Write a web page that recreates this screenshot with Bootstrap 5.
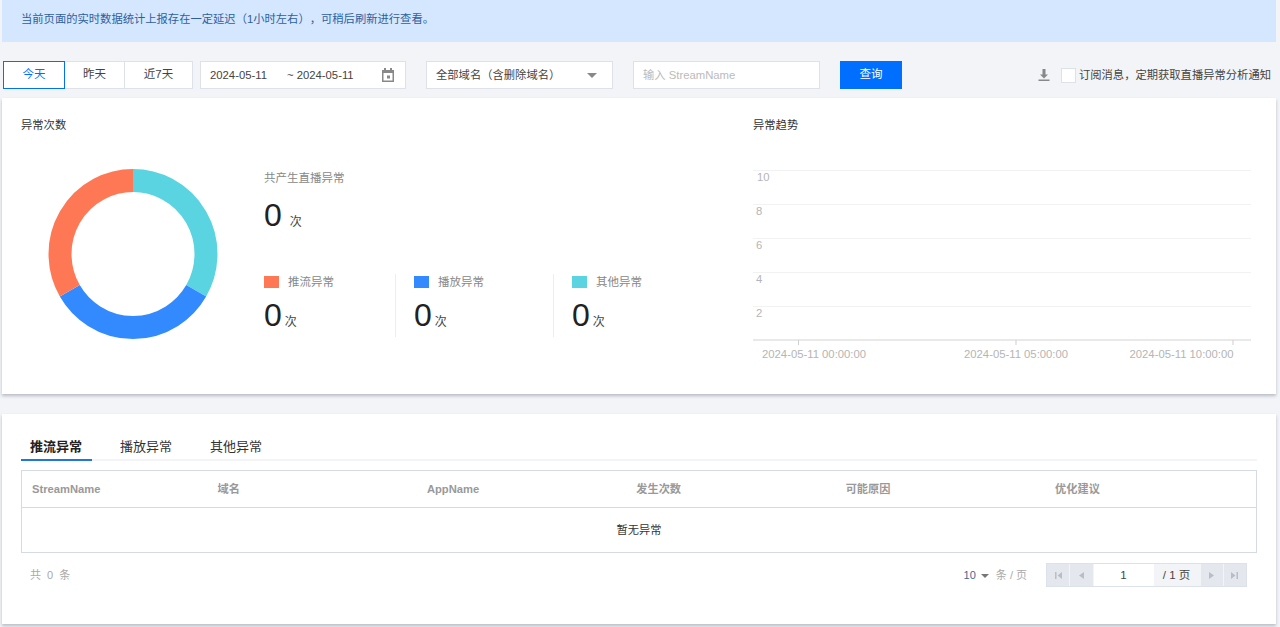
<!DOCTYPE html>
<html lang="zh-CN">
<head>
<meta charset="utf-8">
<title>直播异常</title>
<link href="https://cdn.jsdelivr.net/npm/bootstrap@5.3.0/dist/css/bootstrap.min.css" rel="stylesheet">
<style>
html,body{height:627px;overflow:hidden}
body{background:#f2f4f8;font-family:"Liberation Sans","Noto Sans CJK SC",sans-serif;font-size:11px;color:#444;padding:0 4px 0 2px;text-spacing-trim:space-all}
.notice{height:42px;background:#d5e7ff;color:#2f5e9e;padding-left:19px;line-height:38px;font-size:11.3px}
.toolbar{height:28px;margin-top:19px;margin-bottom:9px;padding-left:1px}
.rangebtn{height:28px;background:#fff;border:1px solid #dde2ea;color:#444;font-size:11.5px;display:flex;align-items:center;justify-content:center;margin-left:-1px}
.rangebtn.on{border-color:#006eff;color:#006eff;position:relative;z-index:1;margin-left:0}
.w62{width:62px}.w61{width:61px}.w69{width:69px}
.fieldbox{height:28px;background:#fff;border:1px solid #dde2ea;display:flex;align-items:center;font-size:11.3px;padding:0 9px;color:#444}
.datebox{width:206px;margin-left:7px}
.dateend{margin-left:20px}
.selbox{width:187px;margin-left:20px}
.inbox{width:187px;margin-left:20px;color:#bbb}
.querybtn{width:62px;height:28px;margin-left:20px;background:#006eff;border:0;border-radius:0;color:#fff;font-size:11.5px;padding:0}
.caret{width:0;height:0;border-left:5px solid transparent;border-right:5px solid transparent;border-top:5px solid #888;margin-left:auto;margin-right:6px}
.subbox{width:15px;height:15px;background:#fff;border:1px solid #dde2ea;margin:0 3px 0 10px}
.subtext{font-size:11.3px;color:#444;margin-right:5px}
.panel{background:#fff;box-shadow:0 2px 3px rgba(54,58,80,.3);border-radius:0}
.panel-top{height:296px;margin-bottom:20px}
.panel-bot{height:210px;padding:21px 19px 0}
.leftpart{width:733px;padding:20px 0 0 19px}
.rightpart{flex:1;padding:20px 23px 0 20px}
.headline{font-size:11.3px;color:#333;line-height:14px}
.donutwrap{width:243px;padding:36px 0 0 27px}
.statcol{padding-top:38px}
.graylabel{color:#888;font-size:11.5px;line-height:16px}
.bignum{font-size:32px;line-height:36px;color:#222}
.unit{font-size:12px;color:#444}
.totalrow{margin-top:11px;height:73px}
.legendcol{height:63px;border-left:1px solid #eee}
.firstleg{width:131px}
.secondleg{width:158px;padding-left:18px}
.thirdleg{padding-left:18px}
.swatch{width:15px;height:12px;margin-right:9px}
.sw-or{background:#ff7856}.sw-bl{background:#338aff}.sw-cy{background:#59d4e0}
.legendrow{height:16px;margin-bottom:7px}
.legendnum .unit{margin-left:3px}
.chartsvg{margin-top:18px}
.tabrow{height:26px;border-bottom:2px solid #f2f4f8;margin-bottom:9px}
.tabitem{font-size:13px;color:#333;padding:0 9px;height:26px;line-height:24px}
.tabitem.on{font-weight:700;color:#222;border-bottom:2px solid #1f75e8;width:71px;padding:0 0 0 9px}
.tab2{margin-left:19px}
.tab3{margin-left:20px}
.grid-table{border:1px solid #d5dbe6;margin:0;table-layout:fixed;width:100%;font-size:11.2px}
.grid-table th{height:37px;color:#999;font-weight:700;padding:0 10px;border-bottom:1px solid #d5dbe6;vertical-align:middle;width:209.4px}
.grid-table th.c1{width:186px}
.grid-table th.clast{width:auto}
.grid-table td{height:45px;color:#333;text-align:center;vertical-align:middle;border:0;padding:0}
.foot{margin-top:10px;height:24px;padding-left:9px;padding-right:10px;color:#aaa}
.perpage{color:#aaa;margin-right:19px;font-size:11px}
.perpage b{font-weight:400;color:#3d6b97}
.minicaret{display:inline-block;width:0;height:0;border-left:4px solid transparent;border-right:4px solid transparent;border-top:4px solid #777;margin:0 7px 0 5px;vertical-align:1px}
.pager-box{height:24px;border:1px solid #dde2ea;background:#f2f4f8}
.pgbtn{width:23.25px;height:22px;background:#e4e8ee;border-right:1px solid #f2f4f8;display:flex;align-items:center;justify-content:center}
.pgbtn.afterpg{border-right:0;border-left:1px solid #f2f4f8}
.pgnum{width:60px;background:#fff;text-align:center;line-height:22px;color:#444;font-size:11.5px}
.pgtotal{width:46px;text-align:center;line-height:22px;color:#444;font-size:11.5px}
</style>
</head>
<body>
<div class="notice">当前页面的实时数据统计上报存在一定延迟（1小时左右），可稍后刷新进行查看。</div>

<div class="toolbar d-flex align-items-center">
  <div class="rangebtn on w62">今天</div>
  <div class="rangebtn w61">昨天</div>
  <div class="rangebtn w69">近7天</div>
  <div class="fieldbox datebox">
    <span>2024-05-11</span><span class="dateend">~ 2024-05-11</span>
    <svg class="ms-auto me-0" width="16" height="16" viewBox="0 0 16 16"><path fill="#888" d="M2 3h2V1h2v2h4V1h2v2h2v12H2zM3.500 6v7.500h9V6z"/><rect x="7" y="8.500" width="3" height="3" fill="#888"/></svg>
  </div>
  <div class="fieldbox selbox"><span>全部域名（含删除域名）</span><span class="caret"></span></div>
  <div class="fieldbox inbox">输入 StreamName</div>
  <button class="btn querybtn" type="button">查询</button>
  <div class="ms-auto d-flex align-items-center">
    <svg width="14" height="14" viewBox="0 0 14 14"><path fill="#888" d="M5.500 1h3v5.500H11L7 10.500 3 6.500h2.500z"/><rect x="1.500" y="11.500" width="11" height="1.500" fill="#888"/></svg>
    <span class="subbox"></span>
    <span class="subtext">订阅消息，定期获取直播异常分析通知</span>
  </div>
</div>

<div class="panel panel-top d-flex">
  <div class="leftpart">
    <div class="headline">异常次数</div>
    <div class="d-flex">
      <div class="donutwrap">
        <svg width="170" height="172" viewBox="0 0 170 172">
          <g fill="none" stroke-width="23">
            <path stroke="#59d4e0" d="M85 12.500A73 73.500 0 0 1 148.200 122.750"/>
            <path stroke="#338aff" d="M148.200 122.750A73 73.500 0 0 1 21.800 122.750"/>
            <path stroke="#ff7856" d="M21.800 122.750A73 73.500 0 0 1 85 12.500"/>
          </g>
        </svg>
      </div>
      <div class="statcol flex-grow-1">
        <div class="graylabel">共产生直播异常</div>
        <div class="totalrow"><span class="bignum">0</span><span class="unit ms-2">次</span></div>
        <div class="d-flex mt-1">
          <div class="firstleg">
            <div class="legendrow d-flex align-items-center"><span class="swatch sw-or"></span><span class="graylabel">推流异常</span></div>
            <div class="legendnum"><span class="bignum">0</span><span class="unit">次</span></div>
          </div>
          <div class="legendcol secondleg">
            <div class="legendrow d-flex align-items-center"><span class="swatch sw-bl"></span><span class="graylabel">播放异常</span></div>
            <div class="legendnum"><span class="bignum">0</span><span class="unit">次</span></div>
          </div>
          <div class="legendcol thirdleg">
            <div class="legendrow d-flex align-items-center"><span class="swatch sw-cy"></span><span class="graylabel">其他异常</span></div>
            <div class="legendnum"><span class="bignum">0</span><span class="unit">次</span></div>
          </div>
        </div>
      </div>
    </div>
  </div>
  <div class="rightpart">
    <div class="headline">异常趋势</div>
    <svg class="d-block chartsvg" width="500" height="220" viewBox="0 0 500 220" font-family="Liberation Sans, sans-serif" font-size="11.3" fill="#b5b5b5">
      <g stroke="#f2f2f2" stroke-width="1">
        <line x1="0" x2="498" y1="20.500" y2="20.500"/><line x1="0" x2="498" y1="54.500" y2="54.500"/>
        <line x1="0" x2="498" y1="88.500" y2="88.500"/><line x1="0" x2="498" y1="122.500" y2="122.500"/>
        <line x1="0" x2="498" y1="156.500" y2="156.500"/>
      </g>
      <line x1="0" x2="498" y1="190" y2="190" stroke="#e2e2e2" stroke-width="1.500"/>
      <g stroke="#cfcfcf"><line x1="45.500" x2="45.500" y1="190" y2="195"/><line x1="263" x2="263" y1="190" y2="195"/><line x1="480" x2="480" y1="190" y2="195"/></g>
      <text x="4" y="31">10</text><text x="3" y="65">8</text><text x="3" y="99">6</text><text x="3" y="133">4</text><text x="3" y="167">2</text>
      <text x="9" y="208">2024-05-11 00:00:00</text><text x="211" y="208">2024-05-11 05:00:00</text><text x="376.500" y="208">2024-05-11 10:00:00</text>
    </svg>
  </div>
</div>

<div class="panel panel-bot">
  <div class="tabrow d-flex">
    <div class="tabitem on">推流异常</div>
    <div class="tabitem tab2">播放异常</div>
    <div class="tabitem tab3">其他异常</div>
  </div>
  <table class="table grid-table">
    <thead><tr><th class="c1">StreamName</th><th>域名</th><th>AppName</th><th>发生次数</th><th>可能原因</th><th class="clast">优化建议</th></tr></thead>
    <tbody><tr><td colspan="6">暂无异常</td></tr></tbody>
  </table>
  <div class="foot d-flex align-items-center justify-content-between">
    <span class="text-nowrap">共&nbsp; 0&nbsp; 条</span>
    <div class="d-flex align-items-center">
      <span class="perpage"><b>10</b><span class="minicaret"></span>条 / 页</span>
      <div class="pager-box d-flex">
        <span class="pgbtn"><svg width="9" height="9" viewBox="0 0 9 9" fill="#b8bec8"><rect x="1" y="1" width="1.500" height="7"/><path d="M8 1v7L3.500 4.500z"/></svg></span>
        <span class="pgbtn"><svg width="9" height="9" viewBox="0 0 9 9" fill="#b8bec8"><path d="M7 1v7L2 4.500z"/></svg></span>
        <span class="pgnum">1</span>
        <span class="pgtotal">/ 1 页</span>
        <span class="pgbtn afterpg"><svg width="9" height="9" viewBox="0 0 9 9" fill="#b8bec8"><path d="M2 1v7l5-3.500z"/></svg></span>
        <span class="pgbtn afterpg"><svg width="9" height="9" viewBox="0 0 9 9" fill="#b8bec8"><path d="M1 1v7l4.500-3.500z"/><rect x="6.500" y="1" width="1.500" height="7"/></svg></span>
      </div>
    </div>
  </div>
</div>
<script src="https://cdn.jsdelivr.net/npm/bootstrap@5.3.0/dist/js/bootstrap.bundle.min.js"></script>
</body>
</html>
